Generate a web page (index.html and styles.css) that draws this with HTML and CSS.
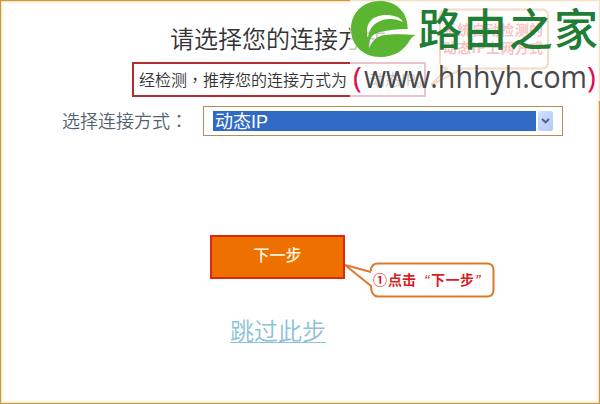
FILE: index.html
```html
<!DOCTYPE html>
<html lang="zh-CN">
<head>
    <meta charset="UTF-8">
    <title>设置向导</title>
    <link rel="stylesheet" href="styles.css">
</head>
<body>
    <div class="container">
        <h1>请选择您的连接方式</h1>
        <div class="notice">经检测<span class="punct" lang="zh-TW">，</span>推荐您的连接方式为<span class="punct" lang="zh-TW">：</span><span class="mode">动态IP。</span></div>

        <div class="form-row">
            <span class="label">选择连接方式<span class="punct" lang="zh-TW">：</span></span>
            <div class="select">
                <span class="value">动态IP</span>
                <span class="arrow">
                    <svg width="9" height="6" viewBox="0 0 9 6"><path d="M1 1l3.500 3.300L8 1" fill="none" stroke="#4a6394" stroke-width="2"/></svg>
                </span>
            </div>
        </div>

        <div class="actions">
            <div class="button">下一步</div>
            <a class="skip">跳过此步</a>
        </div>
    </div>

    <!-- 步骤提示 -->
    <svg class="tip" width="156" height="40" viewBox="0 0 156 40">
        <path d="M26 11 V9 Q27 3.500 33 3.500 H142 Q148.500 3.500 148.500 10 V30 Q148.500 36.500 142 36.500 H33 Q26 36 26 26 L0 5 L26 12" fill="#fff" stroke="#e0782c" stroke-width="2"/>
        <text class="tip-num" x="28" y="25">①</text>
        <text class="tip-text" x="43" y="25" textLength="28">点击</text>
        <text class="tip-quote" x="79" y="27">“</text>
        <text class="tip-text" x="86" y="25" textLength="43">下一步</text>
        <text class="tip-quote" x="130" y="27">”</text>
    </svg>

    <svg class="hint" width="130" height="90" viewBox="0 0 130 90">
        <path d="M17 9.500 H112 Q118 9.500 118 16 V62 Q118 68.500 112 68.500 H33 L1 85 L17 68.500 Q10 67 10 62 V16 Q10 9.500 17 9.500 Z" fill="#fff" stroke="#e0782c" stroke-width="2"/>
        <text x="13" y="35" textLength="100">系统自动检测的</text>
        <text x="13" y="53" textLength="100">动态IP上网方式</text>
    </svg>

    <!-- 站点标志 -->
    <div class="watermark">
        <svg width="250" height="101" viewBox="0 0 250 101">
            <path fill="#5bb531" fill-rule="evenodd" d="M57.700 29 C58 11 45 1 29.500 1 C13 1 1 13 1 29 C1 45 13 57 30 57 C46 57 55 49 60 40 C62 37 64 35.500 66 35 C52 34 42 34 35 35 C26 36 22 41 19 49 C18 39 22 34 30 32 C38 30 48 29 57.700 29 Z M18 38 C14 24 22 15 36 15 C44 15 50 17 53 22 C45 18 35 18 28 22 C21 26 19 31 18 38 Z"/>
            <text class="site-name" x="68" y="46" textLength="180">路由之家</text>
            <text class="paren" x="3" y="88">(</text>
            <text class="site-url" x="14" y="88" textLength="223" lengthAdjust="spacingAndGlyphs">www.hhhyh.com</text>
            <text class="paren" x="237" y="88">)</text>
        </svg>
    </div>
</body>
</html>
```
FILE: styles.css
```css
* {
    box-sizing: border-box;
}
body {
    margin: 0;
    position: relative;
    width: 600px;
    height: 404px;
    overflow: hidden;
    background: #fff;
    font-family: "Noto Sans CJK SC", sans-serif;
}
.container {
    height: 404px;
    border: 1px solid #c39a55;
    box-shadow: inset 0 0 0 1px #ffe3ad, inset 0 0 0 3px #fffaf0;
    padding: 19px 36px 0 61px;
}
h1 {
    margin: 0 0 0 108px;
    font-size: 24px;
    line-height: 36px;
    font-weight: 350;
    color: #333;
}
.notice {
    width: 294px;
    height: 35px;
    margin: 6px 0 0 70px;
    border: 2px solid #b32d32;
    padding-left: 5px;
    font-size: 16px;
    line-height: 31px;
    font-weight: 350;
    color: #333;
    white-space: nowrap;
}
.punct {
    font-family: "Noto Sans CJK TC", sans-serif;
}
.mode {
    margin-left: 6px;
}
.form-row {
    display: flex;
    align-items: center;
    margin-top: 9px;
}
.label {
    width: 141px;
    font-size: 18px;
    line-height: 28px;
    padding-bottom: 2px;
    font-weight: 350;
    color: #53646e;
}
.select {
    display: flex;
    gap: 2px;
    width: 360px;
    height: 30px;
    padding: 4px 8px 4px 9px;
    border: 1px solid #b08d5b;
}
.value {
    width: 323px;
    height: 20px;
    padding-left: 2px;
    background: #316ac5;
    color: #fff;
    font-family: "Liberation Sans", "Noto Sans CJK SC", sans-serif;
    font-size: 18px;
    line-height: 22px;
}
.arrow {
    display: flex;
    align-items: center;
    justify-content: center;
    width: 15px;
    height: 20px;
    border-radius: 2px;
    background: linear-gradient(135deg, #d3e0fd, #b4c8f3);
}
.actions {
    display: flex;
    flex-direction: column;
    align-items: flex-start;
    margin: 99px 0 0 148px;
}
.button {
    width: 135px;
    height: 44px;
    border: 2px solid #df2811;
    background: #ee7100;
    color: #fff5df;
    font-size: 16px;
    font-weight: 500;
    line-height: 35px;
    text-align: center;
}
.skip {
    margin: 33px 0 0 20px;
    color: #8dc1d8;
    font-size: 24px;
    font-weight: 350;
    line-height: 36px;
    text-decoration: underline;
    text-decoration-thickness: 1px;
    text-underline-offset: 2px;
}
.tip {
    position: absolute;
    left: 345px;
    top: 260px;
}
.tip text {
    fill: #d91f26;
}
.tip-num,
.tip-text {
    font-size: 14px;
    font-weight: 700;
}
.tip-quote {
    font-family: "Liberation Sans", sans-serif;
    font-size: 16px;
    font-style: italic;
}
.hint {
    position: absolute;
    left: 430px;
    top: 0;
}
.hint text {
    fill: #e0282c;
    font-size: 14px;
    font-weight: 700;
}
.watermark {
    position: absolute;
    left: 350px;
    top: 0;
    width: 250px;
    height: 101px;
    background: rgba(255, 255, 255, 0.72);
}
.site-name {
    fill: #1f7d36;
    font-size: 44px;
    font-weight: 500;
}
.site-url {
    fill: #48484a;
    font-family: "Open Sans", "Noto Sans", sans-serif;
    font-size: 31px;
}
.paren {
    fill: #e5084f;
    font-family: "Open Sans", "Noto Sans", sans-serif;
    font-size: 30px;
}
```
